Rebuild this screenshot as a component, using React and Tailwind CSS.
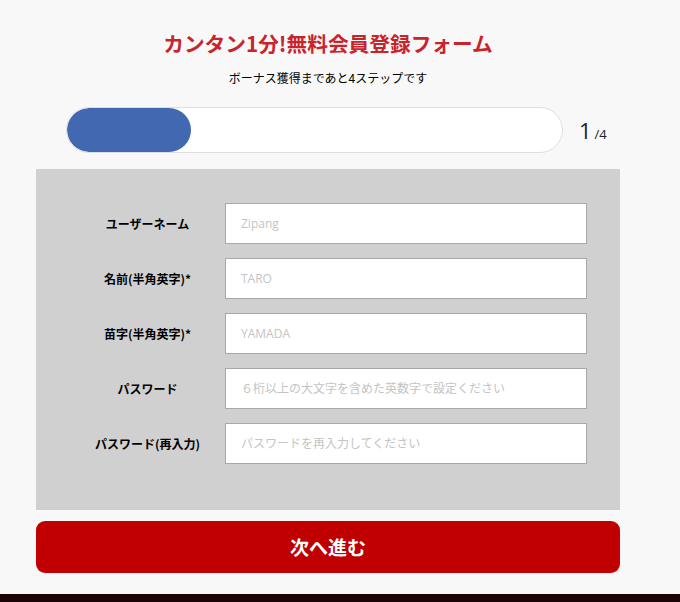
export default function App() {
  const jp = { fontFamily: '"Noto Sans CJK JP", "Noto Sans", sans-serif' };
  const rows = [
    { label: "ユーザーネーム", ph: "Zipang" },
    { label: "名前(半角英字)*", ph: "TARO" },
    { label: "苗字(半角英字)*", ph: "YAMADA" },
    { label: "パスワード", ph: "６桁以上の大文字を含めた英数字で設定ください" },
    { label: "パスワード(再入力)", ph: "パスワードを再入力してください" },
  ];
  return (
    <div className="w-[680px] h-[602px] bg-[#f8f8f8] flex flex-col overflow-hidden" style={jp}>
      <div className="w-[656px] flex flex-col">
        <h1 className="mt-[28px] text-center text-[20.7px] leading-[30px] font-bold text-[#c8242c]">
          カンタン1分!無料会員登録フォーム
        </h1>
        <p className="mt-[12px] text-center text-[12px] leading-[16px] text-black">
          ボーナス獲得まであと4ステップです
        </p>
        <div className="mt-[21px] flex items-center ml-[66px]">
          <div className="w-[497px] h-[46px] rounded-full bg-white border border-[#dedede] overflow-hidden">
            <div className="w-[124px] h-full rounded-full bg-[#4268b2]" />
          </div>
          <div className="ml-[16px] flex items-baseline text-[#222]" style={{ fontFamily: '"Open Sans", "Liberation Sans", sans-serif' }}>
            <span className="text-[22px] leading-none">1</span>
            <span className="ml-[3px] text-[13px] leading-none">/4</span>
          </div>
        </div>
        <div className="mt-[16px] ml-[36px] w-[584px] h-[341px] bg-[#d0d0d0] pt-[34px] pl-[34px] pr-[33px] flex flex-col gap-[14px]">
          {rows.map((r) => (
            <div key={r.label} className="flex items-center">
              <label className="w-[155px] text-center text-[12px] font-bold text-black leading-[16px]">
                {r.label}
              </label>
              <input
                type="text"
                placeholder={r.ph}
                className="flex-1 h-[41px] bg-white border border-[#a8a8a8] px-[15px] text-[12px] text-black placeholder:text-[#c4c4c4] outline-none"
                style={{ fontFamily: '"Open Sans", "Noto Sans CJK JP", sans-serif' }}
              />
            </div>
          ))}
        </div>
        <button className="mt-[11px] ml-[36px] w-[584px] h-[52px] rounded-[9px] bg-[#c00000] text-white text-[19px] font-bold">
          次へ進む
        </button>
      </div>
      <div className="mt-auto h-[8px] bg-[#1a0404]" />
    </div>
  );
}
